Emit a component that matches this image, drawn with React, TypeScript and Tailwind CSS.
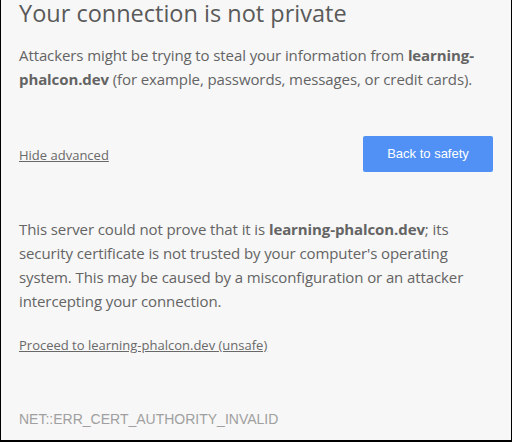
export default function App() {
  return (
    <div className="w-[512px] h-[442px] overflow-hidden bg-[#f7f7f7] border-l border-r border-b-2 border-black pl-[18px] pr-[18px] text-[#646464] font-['Open_Sans',sans-serif]">
      {/* Title */}
      <h1 className="mt-[1px] text-[23.5px] leading-[24px] text-[#5a5a5a] whitespace-nowrap">
        Your connection is not private
      </h1>

      {/* Intro */}
      <p className="mt-[18px] text-[15px] leading-[24px] tracking-[-0.1px]">
        Attackers might be trying to steal your information from <strong className="font-bold">learning-phalcon.dev</strong> (for example, passwords, messages, or credit cards).
      </p>

      {/* Actions */}
      <div className="mt-[45px] flex items-center justify-between">
        <a className="mt-[2px] text-[13px] leading-[20px] text-[#696969] underline cursor-pointer">Hide advanced</a>
        <button className="w-[130px] h-[36px] rounded-[2px] bg-[#5191f5] text-white text-[13px] font-['Liberation_Sans',sans-serif]">
          Back to safety
        </button>
      </div>

      {/* Details */}
      <p className="mt-[45px] text-[15px] leading-[24px] tracking-[-0.1px]">
        This server could not prove that it is <strong className="font-bold">learning-phalcon.dev</strong>; its security certificate is not trusted by your computer's operating system. This may be caused by a misconfiguration or an attacker intercepting your connection.
      </p>

      <a className="block mt-[22px] text-[13px] leading-[20px] text-[#696969] underline cursor-pointer">
        Proceed to learning-phalcon.dev (unsafe)
      </a>

      <div className="mt-[55px] text-[14px] leading-[18px] text-[#a0a0a0] uppercase font-['Liberation_Sans',sans-serif]">
        NET::ERR_CERT_AUTHORITY_INVALID
      </div>
    </div>
  );
}
